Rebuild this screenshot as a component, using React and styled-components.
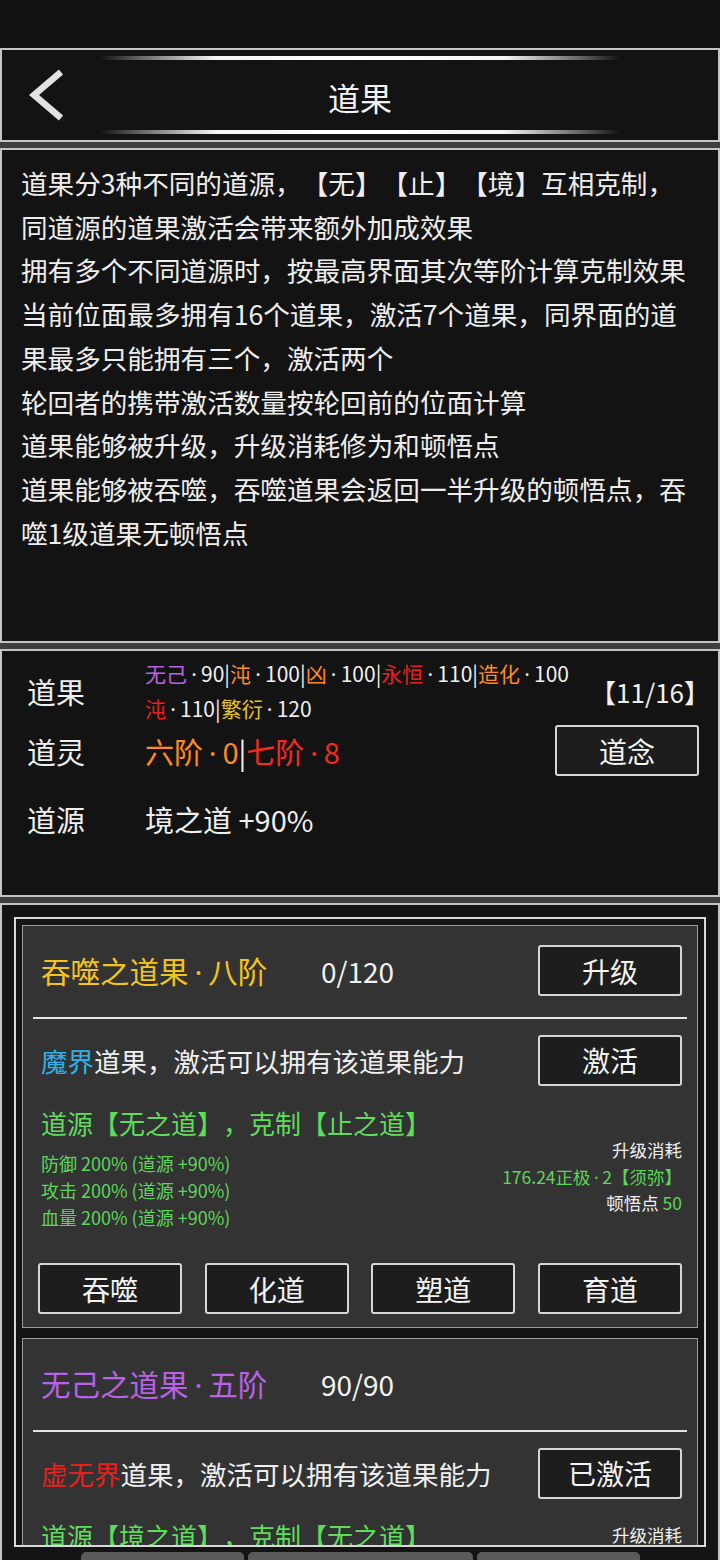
import React from 'react';
import styled, { createGlobalStyle } from 'styled-components';

const FONT = `"Noto Sans CJK SC", "Noto Sans", sans-serif`;

const Global = createGlobalStyle`
  html, body { margin: 0; padding: 0; background: #121212; }
  body {
    font-family: ${FONT};
    color: #ececec;
    text-spacing-trim: space-all;
  }
  * { box-sizing: border-box; }
`;

const Screen = styled.div`
  width: 720px;
  height: 1560px;
  overflow: hidden;
  background: #121212;
  display: flex;
  flex-direction: column;
`;

const StatusBar = styled.div`
  height: 48px;
  flex: none;
  background: #111111;
`;

const Panel = styled.section`
  flex: none;
  height: ${(p) => p.$h}px;
  border: 2px solid #c4c4c4;
  background: #131313;
`;

const Band = styled.div`
  flex: none;
  height: 6px;
  background: #3e3e3e;
`;

/* narrow middle dot used in names like 吞噬之道果·八阶 */
const Dot = styled.span`
  font-family: "Noto Sans", sans-serif;
  padding: 0 0.2em;
`;

/* ---------- header ---------- */
const Header = styled(Panel)`
  display: flex;
  flex-direction: column;
  padding: 6px 0;
`;

const DecoLine = styled.div`
  flex: none;
  align-self: center;
  width: 520px;
  height: 4px;
  border-radius: 2px;
  background: linear-gradient(
    90deg,
    rgba(255, 255, 255, 0) 0%,
    rgba(160, 160, 160, 0.6) 8%,
    #f4f4f4 22%,
    #ffffff 50%,
    #f4f4f4 78%,
    rgba(160, 160, 160, 0.6) 92%,
    rgba(255, 255, 255, 0) 100%
  );
`;

const TitleRow = styled.div`
  flex: 1;
  display: grid;
  grid-template-columns: 1fr auto 1fr;
  align-items: center;
`;

const BackBtn = styled.div`
  padding-left: 24px;
  display: flex;
  align-items: center;
`;

const Title = styled.h1`
  margin: 0;
  font-size: 32px;
  font-weight: 400;
  line-height: 1;
  color: #f4f4f4;
  padding-top: 4px;
`;

/* ---------- description ---------- */
const Desc = styled(Panel)`
  padding: 11px 0 0 19px;
`;

const DescLine = styled.div`
  font-size: 26.6px;
  line-height: 43.7px;
  white-space: nowrap;
  color: #eeeeee;
`;

/* ---------- stats ---------- */
const Stats = styled(Panel)`
  padding: 6px 19px 0 25px;
  display: flex;
  flex-direction: column;
`;

const StatRow = styled.div`
  display: flex;
  align-items: center;
  height: ${(p) => p.$h}px;
  margin-top: ${(p) => p.$mt || 0}px;
`;

const Label = styled.div`
  flex: none;
  width: 118px;
  font-size: 29px;
  color: #f0f0f0;
`;

const StatValue = styled.div`
  flex: 1;
  font-size: 29px;
  color: #f0f0f0;
  white-space: nowrap;
`;

const SmallLines = styled.div`
  flex: 1;
  font-size: 21px;
  line-height: 34px;
  color: #f0f0f0;
  white-space: nowrap;
`;

const C = styled.span`
  color: ${(p) => p.$c};
`;

const Count = styled.div`
  font-size: 26px;
  color: #f0f0f0;
  margin-right: -11px;
`;

const Button = styled.button`
  flex: none;
  width: 144px;
  height: 51px;
  padding: 0;
  border: 2px solid #d6d6d6;
  border-radius: 3px;
  background: #1d1d1d;
  color: #f4f4f4;
  font-family: ${FONT};
  font-size: 28px;
  line-height: 1;
  cursor: pointer;
`;

/* ---------- list ---------- */
const ListPanel = styled.section`
  flex: 1;
  min-height: 0;
  overflow: hidden;
  border: 2px solid #c4c4c4;
  border-bottom: none;
  background: #141414;
  padding: 12px 12px 0 12px;
`;

const ListFrame = styled.div`
  height: 630px;
  overflow: hidden;
  border: 2px solid #d8d8d8;
  padding: 6px;
  display: flex;
  flex-direction: column;
  gap: 10px;
`;

const Card = styled.article`
  flex: none;
  border: 1px solid #9c9c9c;
  background: #333333;
  padding: 19px 15px 13px 18px;
  display: flex;
  flex-direction: column;
`;

const CardRow = styled.div`
  display: flex;
  align-items: center;
  justify-content: space-between;
  height: ${(p) => p.$h || 50}px;
  margin-top: ${(p) => p.$mt || 0}px;
`;

const CardTitle = styled.div`
  display: flex;
  align-items: center;
  white-space: nowrap;
`;

const TitleName = styled.span`
  width: 280px;
  font-size: 29.5px;
  color: ${(p) => p.$c};
`;

const TitleProgress = styled.span`
  font-size: 28px;
  color: #f2f2f2;
`;

const Divider = styled.div`
  height: 2px;
  background: #e4e4e4;
  margin: 21px -5px 0 -8px;
`;

const Realm = styled.div`
  font-size: 26.5px;
  color: #f0f0f0;
  white-space: nowrap;
`;

const InfoBlock = styled.div`
  margin-top: 20px;
  display: flex;
  justify-content: space-between;
  align-items: flex-start;
`;

const InfoLeft = styled.div`
  display: flex;
  flex-direction: column;
`;

const SourceLine = styled.div`
  font-size: 26px;
  line-height: 36px;
  color: #5fdc5c;
  white-space: nowrap;
`;

const EffectList = styled.div`
  margin-top: 9px;
  font-size: 18px;
  line-height: 27px;
  color: #5cd65a;
  white-space: nowrap;
`;

const CostList = styled.div`
  margin-top: ${(p) => p.$mt}px;
  font-size: 17.5px;
  line-height: 26.5px;
  text-align: right;
  color: #f0f0f0;
  white-space: nowrap;
`;

const Green = styled.span`
  color: #5cd65a;
`;

const ActionGrid = styled.div`
  margin: 32px 0 0 -3px;
  display: grid;
  grid-template-columns: repeat(4, 144px);
  justify-content: space-between;
`;

const TabBar = styled.div`
  margin-top: 5px;
  display: flex;
  justify-content: center;
  gap: 4px;
`;

const Tab = styled.div`
  width: ${(p) => p.$w}px;
  height: 24px;
  border-radius: 5px 5px 0 0;
  background: #5a5a5a;
`;

/* ---------- data ---------- */
const ORANGE = '#ff8a1c';
const RED = '#e8201c';
const PURPLE = '#b862e6';
const YELLOW = '#e8c31a';
const GOLD = '#f3c419';
const CYAN = '#2cb2ea';

const descLines = [
  '道果分3种不同的道源，【无】【止】【境】互相克制，',
  '同道源的道果激活会带来额外加成效果',
  '拥有多个不同道源时，按最高界面其次等阶计算克制效果',
  '当前位面最多拥有16个道果，激活7个道果，同界面的道',
  '果最多只能拥有三个，激活两个',
  '轮回者的携带激活数量按轮回前的位面计算',
  '道果能够被升级，升级消耗修为和顿悟点',
  '道果能够被吞噬，吞噬道果会返回一半升级的顿悟点，吞',
  '噬1级道果无顿悟点',
];

const cards = [
  {
    name: '吞噬之道果',
    rank: '八阶',
    color: GOLD,
    progress: '0/120',
    upgradable: true,
    realm: '魔界',
    realmColor: CYAN,
    action: '激活',
    source: '道源【无之道】，克制【止之道】',
    costOffset: 32,
  },
  {
    name: '无己之道果',
    rank: '五阶',
    color: PURPLE,
    progress: '90/90',
    upgradable: false,
    realm: '虚无界',
    realmColor: RED,
    action: '已激活',
    source: '道源【境之道】，克制【无之道】',
    costOffset: 4,
  },
];

function ChevronLeft() {
  return (
    <svg width="40" height="52" viewBox="0 0 40 52" aria-hidden="true">
      <path d="M35 3 L8 26 L35 49" fill="none" stroke="#e2e2e2" strokeWidth="6.5" strokeLinejoin="miter" />
    </svg>
  );
}

function DaoCard({ c }) {
  return (
    <Card>
      <CardRow $h={51}>
        <CardTitle>
          <TitleName $c={c.color}>
            {c.name}
            <Dot>·</Dot>
            {c.rank}
          </TitleName>
          <TitleProgress>{c.progress}</TitleProgress>
        </CardTitle>
        {c.upgradable && <Button>升级</Button>}
      </CardRow>
      <Divider />
      <CardRow $h={50} $mt={16}>
        <Realm>
          <C $c={c.realmColor}>{c.realm}</C>道果，激活可以拥有该道果能力
        </Realm>
        <Button>{c.action}</Button>
      </CardRow>
      <InfoBlock>
        <InfoLeft>
          <SourceLine>{c.source}</SourceLine>
          <EffectList>
            <div>防御 200% (道源 +90%)</div>
            <div>攻击 200% (道源 +90%)</div>
            <div>血量 200% (道源 +90%)</div>
          </EffectList>
        </InfoLeft>
        <CostList $mt={c.costOffset}>
          <div>升级消耗</div>
          <div>
            <Green>
              176.24正极<Dot>·</Dot>2【须弥】
            </Green>
          </div>
          <div>
            顿悟点 <Green>50</Green>
          </div>
        </CostList>
      </InfoBlock>
      <ActionGrid>
        <Button>吞噬</Button>
        <Button>化道</Button>
        <Button>塑道</Button>
        <Button>育道</Button>
      </ActionGrid>
    </Card>
  );
}

export default function App() {
  return (
    <>
      <Global />
      <Screen>
        <StatusBar />
        <Header $h={94}>
          <DecoLine />
          <TitleRow>
            <BackBtn>
              <ChevronLeft />
            </BackBtn>
            <Title>道果</Title>
            <div />
          </TitleRow>
          <DecoLine />
        </Header>
        <Band />
        <Desc $h={495}>
          {descLines.map((l) => (
            <DescLine key={l}>{l}</DescLine>
          ))}
        </Desc>
        <Band />
        <Stats $h={248}>
          <StatRow $h={68}>
            <Label>道果</Label>
            <SmallLines>
              <div>
                <C $c={PURPLE}>无己</C>
                <Dot>·</Dot>90|<C $c={ORANGE}>沌</C>
                <Dot>·</Dot>100|<C $c={ORANGE}>凶</C>
                <Dot>·</Dot>100|<C $c={RED}>永恒</C>
                <Dot>·</Dot>110|<C $c={ORANGE}>造化</C>
                <Dot>·</Dot>100
              </div>
              <div>
                <C $c={RED}>沌</C>
                <Dot>·</Dot>110|<C $c={YELLOW}>繁衍</C>
                <Dot>·</Dot>120
              </div>
            </SmallLines>
            <Count>【11/16】</Count>
          </StatRow>
          <StatRow $h={51}>
            <Label>道灵</Label>
            <StatValue>
              <C $c={ORANGE}>
                六阶<Dot>·</Dot>0
              </C>
              |
              <C $c="#f42a22">
                七阶<Dot>·</Dot>8
              </C>
            </StatValue>
            <Button>道念</Button>
          </StatRow>
          <StatRow $h={51} $mt={17}>
            <Label>道源</Label>
            <StatValue>境之道 +90%</StatValue>
          </StatRow>
        </Stats>
        <Band />
        <ListPanel>
          <ListFrame>
            {cards.map((c) => (
              <DaoCard key={c.name} c={c} />
            ))}
          </ListFrame>
          <TabBar>
            <Tab $w={163} />
            <Tab $w={225} />
            <Tab $w={163} />
          </TabBar>
        </ListPanel>
      </Screen>
    </>
  );
}
